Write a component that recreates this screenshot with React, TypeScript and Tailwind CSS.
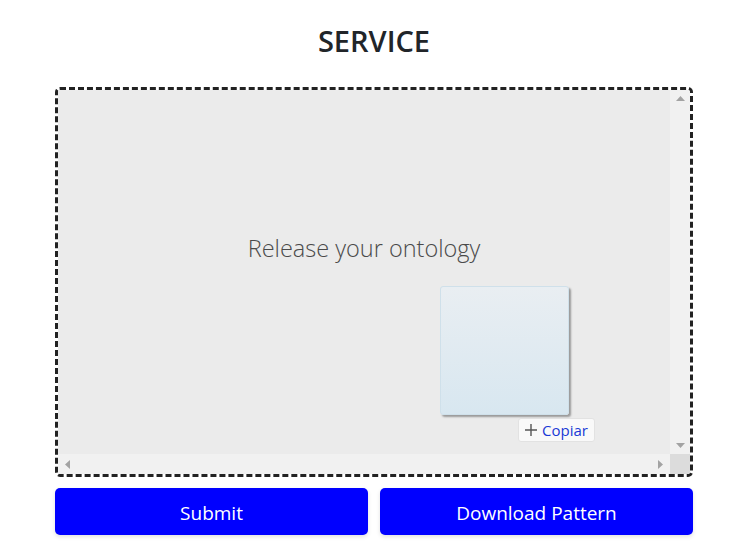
import React from "react";

export default function App() {
  return (
    <div className="w-[738px] h-[553px] bg-white" style={{ fontFamily: '"Open Sans", "Noto Sans", sans-serif' }}>
      <div className="pt-[21px] flex justify-center">
        <h1 className="text-[29px] leading-[40px] font-semibold text-[#212529] ml-[10px]">SERVICE</h1>
      </div>
      <div className="ml-[55px] w-[638px] mt-[26px]">
        <div className="h-[390px] border-[3px] border-dashed border-[#222] rounded-[5px] overflow-hidden flex flex-col">
          <div className="flex flex-1 min-h-0">
            <div className="relative flex-1 bg-[#ebebeb]">
              <div className="pt-[142px] flex justify-center">
                <span className="text-[23.5px] leading-[32px] font-light text-[#4a4a4a]">Release your ontology</span>
              </div>
              <div className="absolute left-[382px] top-[196px] w-[129px] h-[129px] rounded-[3px] border border-[#cfe0ea] bg-gradient-to-b from-[#e9eef2] to-[#d8e7f0] shadow-[2px_2px_2px_rgba(0,0,0,0.35)]" />
              <div className="absolute left-[460px] top-[328px] h-[24px] px-[5px] flex items-center gap-[4px] bg-[#f9f9f9] border border-[#e2e2e2] rounded-[3px]">
                <svg width="14" height="14" viewBox="0 0 14 14">
                  <path d="M7 1v12M1 7h12" stroke="#555" strokeWidth="1.4" />
                </svg>
                <span className="text-[15px] leading-[18px] text-[#1a3ad6] pr-[1px]">Copiar</span>
              </div>
            </div>
            <div className="w-[20px] bg-[#f1f1f1] flex flex-col justify-between items-center py-[6px]">
              <svg width="9" height="5" viewBox="0 0 9 5"><path d="M0 5L4.5 0L9 5Z" fill="#a3a3a3" /></svg>
              <svg width="9" height="5" viewBox="0 0 9 5"><path d="M0 0L4.5 5L9 0Z" fill="#a3a3a3" /></svg>
            </div>
          </div>
          <div className="h-[20px] flex">
            <div className="flex-1 bg-[#f1f1f1] flex justify-between items-center px-[7px]">
              <svg width="5" height="9" viewBox="0 0 5 9"><path d="M5 0L0 4.5L5 9Z" fill="#a3a3a3" /></svg>
              <svg width="5" height="9" viewBox="0 0 5 9"><path d="M0 0L5 4.5L0 9Z" fill="#a3a3a3" /></svg>
            </div>
            <div className="w-[20px] bg-[#dcdcdc]" />
          </div>
        </div>
        <div className="mt-[11px] grid grid-cols-2 gap-[12px]">
          <button className="h-[47px] pt-[3px] rounded-[5px] bg-[#0000ff] text-white text-[19px] shadow-[0_2px_4px_rgba(0,0,0,0.12)]">Submit</button>
          <button className="h-[47px] pt-[3px] rounded-[5px] bg-[#0000ff] text-white text-[19px] shadow-[0_2px_4px_rgba(0,0,0,0.12)]">Download Pattern</button>
        </div>
      </div>
    </div>
  );
}
